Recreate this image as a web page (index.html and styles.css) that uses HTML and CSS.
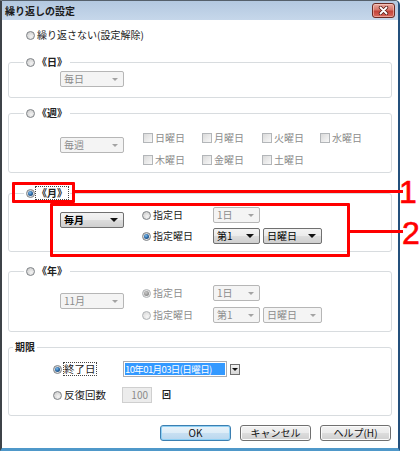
FILE: index.html
```html
<!DOCTYPE html>
<html lang="ja">
<head>
<meta charset="utf-8">
<title>繰り返しの設定</title>
<link rel="stylesheet" href="styles.css">
</head>
<body>
<div class="stage">
  <div class="window">
    <div class="titlebar">
      <span class="title">繰り返しの設定</span>
      <span class="close-btn">
        <svg width="11" height="9" viewBox="0 0 11 9"><path d="M2.5 1.5 L8.5 7.5 M8.5 1.5 L2.5 7.5" stroke="#5a1e18" stroke-width="3.4" stroke-linecap="round"/><path d="M2.5 1.5 L8.5 7.5 M8.5 1.5 L2.5 7.5" stroke="#fff" stroke-width="1.8" stroke-linecap="round"/></svg>
      </span>
    </div>

    <div class="content">
      <label class="opt opt-none"><span class="radio"></span><span class="txt">繰り返さない(設定解除)</span></label>

      <fieldset class="group g-day">
        <legend><span class="lg"><span class="radio"></span><span class="glabel">《日》</span></span></legend>
        <div class="inner day-inner">
          <span class="select sel-main">毎日<i class="arrow"></i></span>
        </div>
      </fieldset>

      <fieldset class="group g-week">
        <legend><span class="lg"><span class="radio"></span><span class="glabel">《週》</span></span></legend>
        <div class="inner week-inner">
          <span class="select sel-main">毎週<i class="arrow"></i></span>
          <div class="days">
            <label class="chk"><span class="check"></span>日曜日</label>
            <label class="chk"><span class="check"></span>月曜日</label>
            <label class="chk"><span class="check"></span>火曜日</label>
            <label class="chk"><span class="check"></span>水曜日</label>
            <label class="chk"><span class="check"></span>木曜日</label>
            <label class="chk"><span class="check"></span>金曜日</label>
            <label class="chk"><span class="check"></span>土曜日</label>
          </div>
        </div>
      </fieldset>

      <fieldset class="group g-month">
        <legend><span class="lg"><span class="radio on"></span><span class="glabel focus">《月》</span></span></legend>
        <div class="inner month-inner">
          <span class="select sel-main active">毎月<i class="arrow"></i></span>
          <div class="choice-grid">
            <label class="opt"><span class="radio"></span><span class="txt">指定日</span></label>
            <div class="sel-group"><span class="select sel-date">1日<i class="arrow"></i></span></div>
            <label class="opt"><span class="radio on"></span><span class="txt">指定曜日</span></label>
            <div class="sel-group"><span class="select sel-nth active">第1<i class="arrow"></i></span><span class="select sel-wd active">日曜日<i class="arrow"></i></span></div>
          </div>
        </div>
      </fieldset>

      <fieldset class="group g-year">
        <legend><span class="lg"><span class="radio"></span><span class="glabel">《年》</span></span></legend>
        <div class="inner year-inner">
          <span class="select sel-main">11月<i class="arrow"></i></span>
          <div class="choice-grid off">
            <label class="opt"><span class="radio on off"></span><span class="txt">指定日</span></label>
            <div class="sel-group"><span class="select sel-date">1日<i class="arrow"></i></span></div>
            <label class="opt"><span class="radio off"></span><span class="txt">指定曜日</span></label>
            <div class="sel-group"><span class="select sel-nth">第1<i class="arrow"></i></span><span class="select sel-wd">日曜日<i class="arrow"></i></span></div>
          </div>
        </div>
      </fieldset>

      <fieldset class="group g-period">
        <legend class="text-legend">期限</legend>
        <div class="inner period-inner">
          <label class="opt"><span class="radio on"></span><span class="txt focus">終了日</span></label>
          <div class="date-field">
            <span class="date-input"><span class="selection">10年01月03日(日曜日)</span></span>
            <span class="drop"><i class="arrow"></i></span>
          </div>
          <label class="opt"><span class="radio"></span><span class="txt">反復回数</span></label>
          <div class="count-field">
            <span class="num">100</span>
            <span class="unit">回</span>
          </div>
        </div>
      </fieldset>

      <div class="buttons">
        <span class="btn default">OK</span>
        <span class="btn">キャンセル</span>
        <span class="btn">ヘルプ(H)</span>
      </div>
    </div>
  </div>

  <!-- annotation callouts -->
  <div class="callout box-1"></div>
  <div class="callout line-1"></div>
  <span class="callout-num num-1">1</span>
  <div class="callout box-2"></div>
  <div class="callout line-2"></div>
  <span class="callout-num num-2">2</span>
</div>
</body>
</html>
```

FILE: styles.css
```css
* { box-sizing: border-box; }

html, body {
  margin: 0;
  padding: 0;
}

body {
  width: 419px;
  height: 451px;
  overflow: hidden;
  background: #fff;
  font-family: "Noto Sans CJK JP", "Noto Sans", sans-serif;
  font-size: 10px;
  line-height: 12px;
  color: #1a1a1a;
}

.stage {
  position: relative;
  width: 419px;
  height: 451px;
}

/* ---- window frame ---- */
.window {
  width: 400px;
  height: 451px;
  display: flex;
  flex-direction: column;
  background: #fff;
  border-top: 1px solid #55606b;
  border-left: 2px solid #3e4348;
  border-right: 2px solid #24507c;
  border-bottom: 3px solid #4f98c9;
  border-top-right-radius: 5px;
}

.titlebar {
  height: 19px;
  flex: none;
  display: flex;
  align-items: center;
  justify-content: space-between;
  padding: 0 3px 0 3px;
  background: linear-gradient(#b3c8e0, #c6d7ea);
  border-top-right-radius: 4px;
}

.title {
  font-weight: bold;
  font-size: 10px;
  color: #1b1b1b;
}

.close-btn {
  width: 23px;
  height: 15px;
  display: flex;
  align-items: center;
  justify-content: center;
  border: 1px solid #6b2a24;
  border-radius: 3px;
  background: linear-gradient(#e9aaa0 0%, #d6766b 45%, #c3443a 55%, #d9685c 100%);
  box-shadow: inset 0 0 0 1px rgba(255, 220, 210, 0.5);
}

.content {
  flex: 1;
  display: flex;
  flex-direction: column;
  padding: 0 6px;
}

/* ---- radios / checkboxes ---- */
.opt {
  display: flex;
  align-items: center;
  gap: 2px;
  height: 12px;
  white-space: nowrap;
}

.opt-none {
  margin: 9px 0 0 18px;
}

.radio {
  position: relative;
  flex: none;
  width: 9px;
  height: 9px;
  border-radius: 50%;
  border: 1px solid #7e8286;
  background: radial-gradient(circle at 60% 65%, #f4f4f4 0, #cfcfcf 80%);
}

.radio.on::after {
  content: "";
  position: absolute;
  left: 1px;
  top: 1px;
  width: 5px;
  height: 5px;
  border-radius: 50%;
  background: radial-gradient(circle at 40% 35%, #7fbff0 0, #2a67a3 50%, #143762 100%);
}

.radio.off {
  border-color: #aeb2b5;
  background: radial-gradient(circle at 60% 65%, #f6f6f6 0, #dcdcdc 80%);
}

.radio.on.off::after {
  background: radial-gradient(circle at 40% 35%, #c9c9c9 0, #8a8a8a 70%);
}

.check {
  flex: none;
  width: 10px;
  height: 10px;
  border: 1px solid #b3b6b9;
  background: linear-gradient(135deg, #dadada, #f8f8f8);
}

.chk {
  display: flex;
  align-items: center;
  gap: 2px;
  height: 12px;
  color: #8d8d8d;
  white-space: nowrap;
}

/* ---- group boxes ---- */
.group {
  margin: 0;
  padding: 0;
  min-width: 0;
  border: 1px solid #d8dcdf;
  border-radius: 3px;
}

.group legend {
  margin-left: 15px;
  padding: 0 2px;
  height: 12px;
  line-height: 12px;
}

.lg {
  display: inline-flex;
  align-items: center;
  gap: 1px;
  height: 12px;
}

.glabel {
  font-weight: bold;
  color: #222;
  padding: 0 1px;
}

.focus {
  outline: 1px dotted #444;
  outline-offset: 0;
}

.text-legend {
  font-weight: bold;
  color: #222;
}

.group legend.text-legend {
  margin-left: 4px;
}

.g-day { margin-top: 15px; }
.g-week { margin-top: 9px; }
.g-month { margin-top: 14px; }
.g-year { margin-top: 13px; }
.g-period { margin-top: 9px; }

.inner {
  display: flex;
  align-items: flex-start;
  padding-left: 51px;
}

.day-inner { padding-top: 3px; padding-bottom: 10px; }

.week-inner { padding-top: 13px; padding-bottom: 6px; gap: 19px; }
.week-inner .sel-main { margin-top: 5px; }

.month-inner { padding-top: 8px; padding-bottom: 7px; gap: 18px; }
.month-inner .sel-main { margin-top: 5px; }

.year-inner { padding-top: 8px; padding-bottom: 8px; gap: 18px; }
.year-inner .sel-main { margin-top: 8px; }

.days {
  display: grid;
  grid-template-columns: 59px 60px 58px auto;
  grid-auto-rows: 12px;
  row-gap: 10px;
}

.choice-grid {
  display: grid;
  grid-template-columns: 71px auto;
  grid-template-rows: 16px 16px;
  row-gap: 5px;
  align-items: center;
}

.year-inner .choice-grid { row-gap: 6px; }

.choice-grid.off .txt { color: #8d8d8d; }

.sel-group {
  display: flex;
  gap: 3px;
}

/* ---- drop-down boxes ---- */
.select {
  display: flex;
  align-items: center;
  justify-content: space-between;
  height: 16px;
  padding: 0 5px 0 3px;
  border: 1px solid #b6b6b6;
  border-radius: 2px;
  background: #f4f4f4;
  color: #8c8c8c;
  white-space: nowrap;
}

.select .arrow {
  width: 0;
  height: 0;
  border-left: 3px solid transparent;
  border-right: 3px solid transparent;
  border-top: 3px solid #a3a3a3;
}

.select.active {
  border-color: #707070;
  background: linear-gradient(#f3f3f3 0%, #ebebeb 50%, #dddddd 50%, #cfcfcf 100%);
  color: #000;
}

.select.active .arrow {
  border-left-width: 4px;
  border-right-width: 4px;
  border-top: 4px solid #111;
}

.sel-main { width: 64px; flex: none; }
.sel-main.active { font-weight: bold; }
.sel-date { width: 47px; }
.sel-nth { width: 47px; }
.sel-wd { width: 59px; }

/* ---- period ---- */
.period-inner {
  display: grid;
  grid-template-columns: 70px auto;
  grid-template-rows: 16px 16px;
  row-gap: 10px;
  align-items: center;
  padding: 8px 0 12px 44px;
}

.period-inner .txt {
  font-size: 10.5px;
}

.date-field {
  display: flex;
  align-items: center;
  gap: 3px;
}

.date-input {
  display: flex;
  align-items: center;
  width: 104px;
  height: 16px;
  padding: 1px;
  border: 1px solid #abadb3;
  background: #fff;
}

.selection {
  flex: 1;
  height: 12px;
  line-height: 12px;
  background: #3399ff;
  color: #fff;
  font-size: 9.5px;
  letter-spacing: -0.6px;
  white-space: nowrap;
  overflow: hidden;
}

.drop {
  width: 10px;
  height: 11px;
  display: flex;
  align-items: center;
  justify-content: center;
  border: 1px solid #707070;
  background: linear-gradient(#f3f3f3, #d6d6d6);
}

.drop .arrow {
  width: 0;
  height: 0;
  border-left: 3px solid transparent;
  border-right: 3px solid transparent;
  border-top: 3px solid #111;
}

.count-field {
  display: flex;
  align-items: center;
  gap: 10px;
  margin-left: -1px;
}

.num {
  width: 30px;
  height: 16px;
  padding-right: 3px;
  text-align: right;
  line-height: 14px;
  border: 1px solid #cfcfcf;
  background: #ececec;
  color: #8a8a8a;
}

.unit {
  font-weight: bold;
  font-size: 9px;
  color: #222;
}

/* ---- command buttons ---- */
.buttons {
  display: flex;
  justify-content: flex-end;
  gap: 9px;
  margin-top: 9px;
  padding-right: 1px;
}

.btn {
  width: 71px;
  height: 16px;
  display: flex;
  align-items: center;
  justify-content: center;
  border: 1px solid #707070;
  border-radius: 3px;
  background: linear-gradient(#f2f2f2 0%, #ebebeb 50%, #dddddd 50%, #cfcfcf 100%);
  box-shadow: inset 0 0 0 1px #fbfbfb;
  color: #111;
}

.btn.default {
  border-color: #3c7fb1;
  background: linear-gradient(#eaf3fa 0%, #dcecf7 50%, #c8e0f2 50%, #b9d6ee 100%);
  box-shadow: inset 0 0 0 1px #8fd0f4;
}

/* ---- annotation callouts ---- */
.callout {
  position: absolute;
}

.box-1 {
  left: 12px;
  top: 182px;
  width: 63px;
  height: 21px;
  border: 3px solid #ff0000;
  border-radius: 1px;
}

.line-1 {
  left: 75px;
  top: 190px;
  width: 328px;
  height: 3px;
  background: #ff0000;
}

.box-2 {
  left: 50px;
  top: 203px;
  width: 300px;
  height: 54px;
  border: 3px solid #ff0000;
  border-radius: 1px;
}

.line-2 {
  left: 350px;
  top: 230px;
  width: 53px;
  height: 3px;
  background: #ff0000;
}

.callout-num {
  position: absolute;
  font-family: "Liberation Sans", Arial, sans-serif;
  font-size: 32px;
  line-height: 32px;
  color: #ff0000;
  -webkit-text-stroke: 0.6px #ff0000;
}

.num-1 { left: 399px; top: 176px; }
.num-2 { left: 402px; top: 217px; }
```
